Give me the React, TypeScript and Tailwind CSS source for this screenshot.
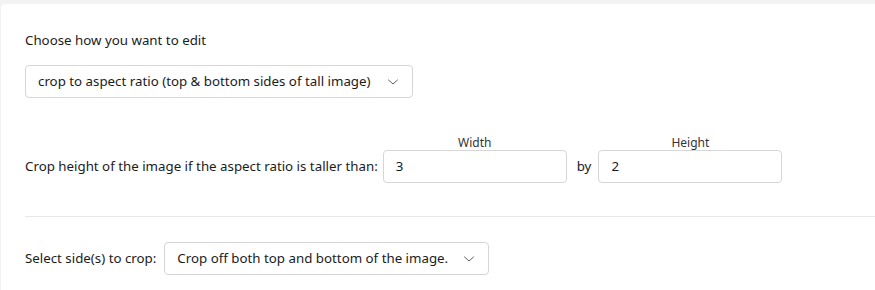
import React from "react";

const Chevron = () => (
  <svg width="12" height="12" viewBox="0 0 12 12" fill="none" className="text-[#5f5f5f]">
    <path d="M1.5 4 L6 8 L10.5 4" stroke="currentColor" strokeWidth="1" strokeLinecap="round" strokeLinejoin="round" />
  </svg>
);

export default function App() {
  return (
    <div className="w-[875px] h-[290px] bg-[#f3f3f3] pt-1 pl-px overflow-hidden" style={{ fontFamily: '"Noto Sans", "Segoe UI", sans-serif' }}>
      <div className="h-full bg-white rounded-tl-[4px] text-[#1b1b1b] text-[13.3px]">
        <div className="pl-6 pt-[27px]">
          <div className="h-[18px] leading-[18px]">Choose how you want to edit</div>
          <div className="mt-[16px] w-[388px] h-[33px] border border-[#d6d6d6] rounded-[4px] flex items-center justify-between pl-[12px] pr-[13px]">
            <span>crop to aspect ratio (top &amp; bottom sides of tall image)</span>
            <Chevron />
          </div>
          <div className="mt-[39px] flex items-end">
            <div className="h-[33px] flex items-center pr-[5px]">Crop height of the image if the aspect ratio is taller than:</div>
            <div className="flex flex-col items-center">
              <div className="text-[12px] leading-[12px] mb-[1px] text-[#333]">Width</div>
              <div className="w-[184px] h-[33px] border border-[#d6d6d6] rounded-[4px] flex items-center pl-[12px]">3</div>
            </div>
            <div className="h-[33px] flex items-center pl-[10px] pr-[7px]">by</div>
            <div className="flex flex-col items-center">
              <div className="text-[12px] leading-[12px] mb-[1px] text-[#333]">Height</div>
              <div className="w-[184px] h-[33px] border border-[#d6d6d6] rounded-[4px] flex items-center pl-[12px]">2</div>
            </div>
          </div>
          <div className="mt-[33px] h-px bg-[#e8e8e8]" />
          <div className="mt-[25px] flex items-center">
            <div className="pr-[8px]">Select side(s) to crop:</div>
            <div className="w-[325px] h-[33px] border border-[#d6d6d6] rounded-[4px] flex items-center justify-between pl-[12px] pr-[13px]">
              <span>Crop off both top and bottom of the image.</span>
              <Chevron />
            </div>
          </div>
        </div>
      </div>
    </div>
  );
}
